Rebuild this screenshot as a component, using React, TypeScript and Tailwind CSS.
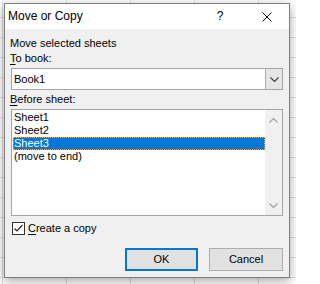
import React from "react";

const sheets = ["Sheet1", "Sheet2", "Sheet3", "(move to end)"];

function Chevron({ up, className }: { up?: boolean; className?: string }) {
  return (
    <svg width="9" height="5" viewBox="0 0 9 5" className={className}>
      <path
        d={up ? "M0.5 4.5 L4.5 0.5 L8.5 4.5" : "M0.5 0.5 L4.5 4.5 L8.5 0.5"}
        fill="none"
        stroke="currentColor"
        strokeWidth="1.2"
      />
    </svg>
  );
}

export default function App() {
  return (
    <div className="w-[296px] h-[284px] overflow-hidden bg-white bg-[linear-gradient(to_right,#dcdcdc_1px,transparent_1px),linear-gradient(to_bottom,#dcdcdc_1px,transparent_1px)] bg-[length:64px_20px] bg-[position:2px_17px] pt-[3px] pl-[4px] font-['Liberation_Sans',Arial,sans-serif] text-[11px] leading-[15px] text-black">
      {/* Dialog window */}
      <div className="w-[286px] h-[275px] border border-[#7d7d7d] bg-[#f0f0f0] flex flex-col shadow-[0_3px_10px_rgba(0,0,0,0.35)]">
        {/* Title bar */}
        <div className="h-[25px] bg-white flex items-center pl-[3px] shrink-0 text-[12px]">
          <span className="flex-1">Move or Copy</span>
          <span className="w-[10px] text-center mr-[37px]">?</span>
          <svg width="10" height="10" viewBox="0 0 10 10" className="mr-[17px]">
            <path d="M0.5 0.5 L9.5 9.5 M9.5 0.5 L0.5 9.5" stroke="#111" strokeWidth="1" fill="none" />
          </svg>
        </div>

        {/* Body */}
        <div className="flex-1 flex flex-col px-[6px] pt-[7px] pb-[6px]">
          <div className="-ml-px">Move selected sheets</div>
          <div className="-ml-px">
            <u className="underline-offset-2">T</u>o book:
          </div>

          {/* Combo box */}
          <div className="mt-[2px] h-[22px] border border-[#a5a5a5] bg-white flex">
            <div className="flex-1 flex items-center pl-[2px]">Book1</div>
            <div className="w-[17px] bg-[#e5e5e5] border-l border-[#acacac] flex items-center justify-center text-[#444]">
              <Chevron />
            </div>
          </div>

          <div className="-ml-px mt-[2px]">
            <u className="underline-offset-2">B</u>efore sheet:
          </div>

          {/* List box */}
          <div className="mt-[2px] h-[107px] border border-[#a5a5a5] bg-white flex">
            <div className="flex-1 pt-px pl-px">
              {sheets.map((s) => (
                <div
                  key={s}
                  className={
                    s === "Sheet3"
                      ? "h-[13px] leading-[13px] pl-px bg-[#0078d7] text-white outline outline-1 outline-dotted outline-[#f7a545] -outline-offset-1"
                      : "h-[13px] leading-[13px] pl-px"
                  }
                >
                  {s}
                </div>
              ))}
            </div>
            <div className="w-[17px] bg-[#f0f0f0] flex flex-col items-center justify-between pt-[8px] pb-[7px] text-[#a3a3a3]">
              <Chevron up />
              <Chevron />
            </div>
          </div>

          {/* Checkbox */}
          <div className="mt-[5px] flex items-center">
            <div className="w-[13px] h-[13px] border border-[#333] bg-white flex items-center justify-center ml-px">
              <svg width="11" height="11" viewBox="0 0 11 11">
                <path d="M1.5 5.5 L4 8 L9.5 2" fill="none" stroke="#222" strokeWidth="1.2" />
              </svg>
            </div>
            <span className="ml-[3px]">
              <u className="underline-offset-2">C</u>reate a copy
            </span>
          </div>

          {/* Buttons */}
          <div className="mt-auto flex justify-end gap-[11px]">
            <button className="w-[73px] h-[23px] border-2 border-[#0078d7] bg-[#e1e1e1]">OK</button>
            <button className="w-[74px] h-[23px] border border-[#adadad] bg-[#e1e1e1]">Cancel</button>
          </div>
        </div>
      </div>
    </div>
  );
}
